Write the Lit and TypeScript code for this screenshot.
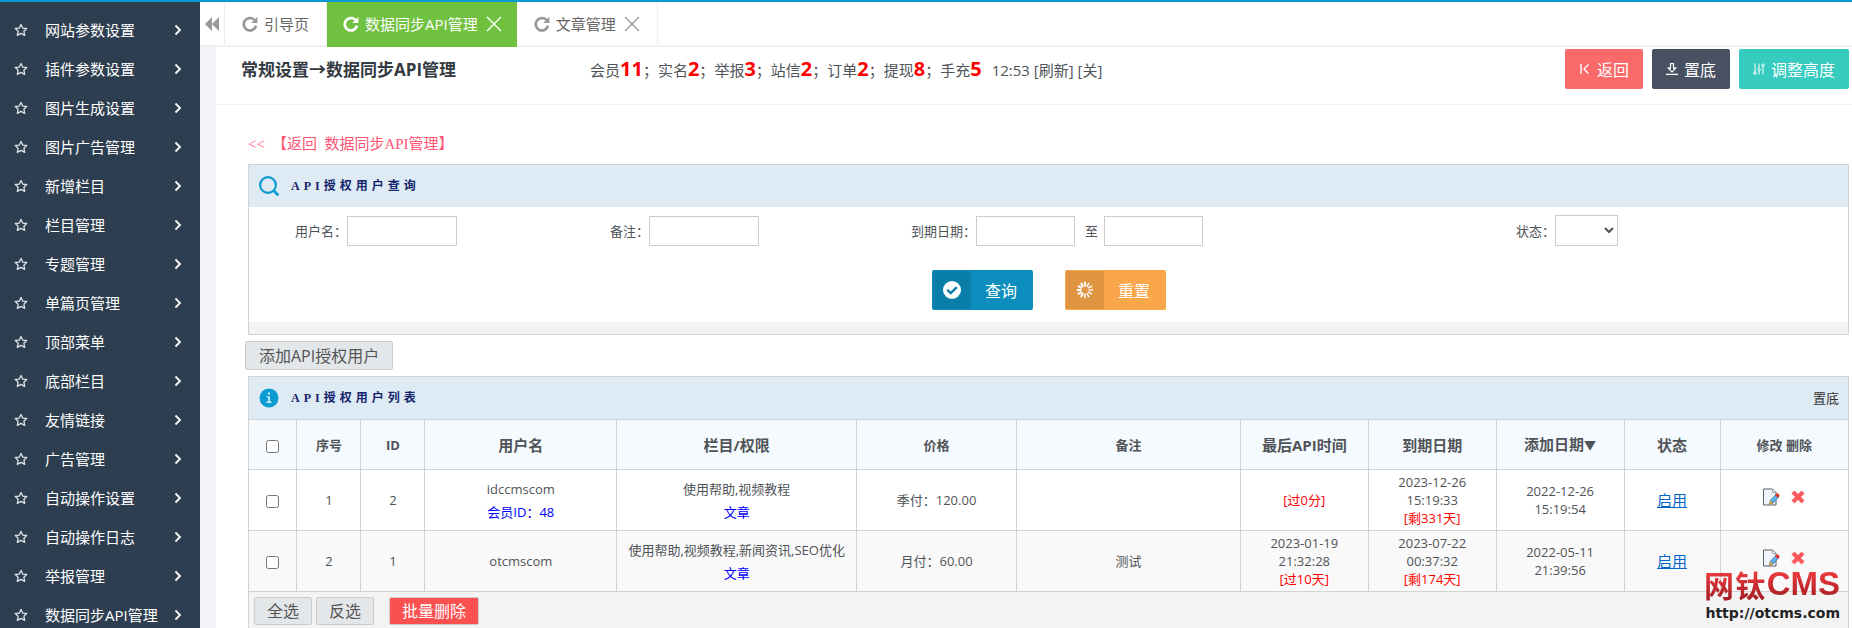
import { LitElement, html, css, svg, nothing } from "lit";
import { customElement, state } from "lit/decorators.js";

interface Row {
  no: number;
  id: number;
  user: string;
  memberId?: number;
  columns: string;
  kind: string;
  price: string;
  note: string;
  apiTime: string[];
  apiTag: string;
  expire: string[];
  expireTag: string;
  added: string[];
}

const MENU = [
  "网站参数设置", "插件参数设置", "图片生成设置", "图片广告管理",
  "新增栏目", "栏目管理", "专题管理", "单篇页管理",
  "顶部菜单", "底部栏目", "友情链接", "广告管理",
  "自动操作设置", "自动操作日志", "举报管理", "数据同步API管理",
];

const STATS: [string, number][] = [
  ["会员", 11], ["实名", 2], ["举报", 3], ["站信", 2], ["订单", 2], ["提现", 8], ["手充", 5],
];

const ROWS: Row[] = [
  {
    no: 1, id: 2, user: "idccmscom", memberId: 48,
    columns: "使用帮助,视频教程", kind: "文章", price: "季付：120.00", note: "",
    apiTime: [], apiTag: "[过0分]",
    expire: ["2023-12-26", "15:19:33"], expireTag: "[剩331天]",
    added: ["2022-12-26", "15:19:54"],
  },
  {
    no: 2, id: 1, user: "otcmscom",
    columns: "使用帮助,视频教程,新闻资讯,SEO优化", kind: "文章", price: "月付：60.00", note: "测试",
    apiTime: ["2023-01-19", "21:32:28"], apiTag: "[过10天]",
    expire: ["2023-07-22", "00:37:32"], expireTag: "[剩174天]",
    added: ["2022-05-11", "21:39:56"],
  },
];

const star = html`<svg class="star" viewBox="0 0 14 14" width="14" height="14" aria-hidden="true">
  <path d="M7 1.4 8.7 5.1 12.7 5.5 9.9 8.3 10.7 12.4 7 10.4 3.3 12.4 4.1 8.3 1.3 5.5 5.3 5.1Z"
    fill="none" stroke="#dfe4e8" stroke-width="1.3" stroke-linejoin="round"/></svg>`;

const chevron = html`<svg viewBox="0 0 8 12" width="8" height="12" aria-hidden="true">
  <path d="M1.5 1.5 6 6 1.5 10.5" fill="none" stroke="#fff" stroke-width="1.8"/></svg>`;

const refresh = html`<svg viewBox="0 0 16 16" width="16" height="16" aria-hidden="true">
  <path d="M12.4 3.9A6.2 6.2 0 1 0 14 9.6" fill="none" stroke="currentColor" stroke-width="2.7"/>
  <path d="M15.4.8V7H9.2Z" fill="currentColor"/></svg>`;

const cross = html`<svg viewBox="0 0 16 16" width="16" height="16" aria-hidden="true">
  <path d="M1 1 15 15M15 1 1 15" fill="none" stroke="currentColor" stroke-width="1.4"/></svg>`;

const loader = html`<svg viewBox="0 0 18 18" width="18" height="18" aria-hidden="true">
  ${Array.from({ length: 12 }, (_, i) => svg`<path d="M9 .8V5.4" stroke="#fff"
    stroke-width=${i > 6 || i === 0 ? 2 : 1.4} transform="rotate(${i * 30} 9 9)"/>`)}</svg>`;

const editIcon = html`<svg viewBox="0 0 18 18" width="18" height="18" aria-hidden="true">
  <path d="M1.5 1H10.5L14 4.5V17H1.5Z" fill="#eef4f9" stroke="#59616b" stroke-width="1"/>
  <path d="M10.5 1V4.5H14Z" fill="#fff" stroke="#8c949b" stroke-width=".8"/>
  <path d="M8.2 12.6 13.9 6.5 16.6 9 10.8 15.2Z" fill="#5fb4f0" stroke="#2d5f96" stroke-width=".7"/>
  <path d="M13.2 7.2 14.6 5.7Q15.4 5 16.3 5.8L17.2 6.7Q17.9 7.5 17.2 8.3L15.9 9.7Z" fill="#e8301c"/>
  <path d="M7.2 16.2 8.2 12.6 10.8 15.2Z" fill="#f3c04f" stroke="#8a6a2c" stroke-width=".6"/></svg>`;

const deleteIcon = html`<svg viewBox="0 0 14 14" width="14" height="14" aria-hidden="true">
  <path d="M3.4.8 7 4.2 10.6.8 13.3 3.4 9.8 7 13.3 10.6 10.6 13.2 7 9.8 3.4 13.2.7 10.6 4.2 7 .7 3.4Z"
    fill="#f8585a" stroke="#fa8c8c" stroke-width=".6" stroke-linejoin="round"/></svg>`;

@customElement("app-root")
export class AppRoot extends LitElement {
  @state() private picked = new Set<number>();

  static styles = css`
    :host {
      display: flex;
      flex-direction: column;
      height: 100vh;
      overflow: hidden;
      box-sizing: border-box;
      border-top: 2px solid #0c98d0;
      background: #fff;
      color: #505458;
      font: 13px/18px "Open Sans", "Noto Sans CJK SC", sans-serif;
    }
    *, *::before, *::after { box-sizing: border-box; }
    svg { display: block; flex: none; }
    a { color: inherit; text-decoration: none; }
    button { font-family: inherit; cursor: pointer; margin: 0; }

    .shell { display: flex; flex: 1; min-height: 0; }

    .sidebar { flex: none; width: 200px; background: #2d3e50; overflow: hidden; }
    .menu { list-style: none; margin: 0; padding: 8px 0 0; }
    .menu a {
      display: flex;
      align-items: center;
      height: 39px;
      padding: 0 18px 0 14px;
      color: #fff;
      font-size: 15px;
    }
    .star { margin-right: 17px; }
    .menu span { flex: 1; }

    .main { flex: 1; min-width: 0; display: flex; flex-direction: column; }

    .tabs { display: flex; flex: none; height: 45px; box-shadow: inset 0 -2px #eff0f0; font-size: 15px; color: #666; }
    .fold { width: 25px; padding: 0; border: 0; border-right: 1px solid #eee; background: none; color: #999; display: grid; place-items: center; height: 43px; }
    .tab { display: flex; align-items: center; height: 43px; padding: 0 17px; border-right: 1px solid #eee; }
    .tab a { display: flex; align-items: center; gap: 6px; height: 36px; }
    .tab svg { color: #999; }
    .tab.active { height: 45px; padding: 0 15px 2px 16px; border: 0; background: #71c140; color: #fff; }
    .tab.active svg { color: #fff; }
    .close { padding: 0; margin-left: 8px; border: 0; background: none; color: #999; }

    .page { flex: 1; min-height: 0; display: flex; flex-direction: column; border-left: 16px solid #f4f5fa; }
    .head { display: flex; align-items: flex-start; flex: none; height: 58px; padding: 2px 3px 0 25px; border-bottom: 1px solid #f4f4f4; }
    .head h1 { flex: none; width: 349px; margin: 0; font-size: 17px; line-height: 42px; font-weight: 700; color: #333a42; }
    .stats { flex: 1; font-size: 15px; line-height: 42px; white-space: nowrap; }
    .stats b { color: #f00; font-size: 20px; line-height: 20px; }
    .clock { margin-left: 10px; }
    .tools { display: flex; gap: 9px; }
    .tool { display: flex; align-items: center; gap: 6px; height: 40px; padding: 0 14px; border: 0; border-radius: 2px; color: #fff; font-size: 16px; }
    .back { background: #fa6a6a; }
    .bottom { background: #475161; }
    .adjust { background: #35cbbe; }

    .content { flex: 1; min-height: 0; display: flex; flex-direction: column; padding: 27px 3px 0 32px; }
    .crumb { display: flex; gap: 7px; flex: none; align-self: flex-start; margin-bottom: 8px; font: 15px/24px "Liberation Serif", "Noto Sans CJK SC", serif; color: #ff5574; }

    .panel { flex: none; border: 1px solid #d3d3d3; }
    .bar { display: flex; flex: none; align-items: center; height: 42px; padding: 0 9px 0 10px; background: #deeaf4; }
    .bar h2 { flex: 1; margin: 0 0 0 12px; font: 700 12px/18px "Liberation Serif", "Noto Sans CJK SC", serif; letter-spacing: 4px; color: #14246b; }
    .bar a { color: #333; }

    .fields { display: grid; grid-template-columns: 98fr 202fr 100fr 200fr 127fr 400fr 179fr 293fr; align-items: center; padding-top: 8px; }
    .fields label { text-align: right; white-space: nowrap; }
    .field { display: flex; align-items: center; }
    .field input, .field select { height: 30px; margin: 0; border: 1px solid #ccc; border-radius: 0; background: #fff; font: inherit; color: inherit; }
    .field input { width: 110px; }
    .field .date { width: 99px; }
    .field select { width: 63px; height: 31px; }
    .to { padding: 0 6px 0 10px; }
    .actions { display: flex; justify-content: center; gap: 32px; padding: 24px 0 12px; }
    .action { display: flex; align-items: center; width: 101px; height: 40px; padding: 1px; border: 0; border-radius: 2px; color: #fff; font-size: 16px; text-align: center; }
    .action i { display: grid; place-items: center; width: 38px; height: 38px; background: rgba(0, 0, 0, 0.1); }
    .action span { flex: 1; }
    .query { background: #0b8dbd; }
    .reset { background: #faa64b; }
    .strip { height: 12px; background: #f3f3f3; }

    .btn { height: 28px; padding: 0 12px; border: 1px solid #ccc; border-radius: 2px; background: #e4e7ea; color: #555; font-size: 16px; line-height: 24px; white-space: nowrap; }
    .add { flex: none; align-self: flex-start; height: 29px; padding: 0 13px; margin: 6px 0 6px -3px; }
    .danger { background: #fa5050; color: #fff; margin-left: 11px; }

    .list { flex: 1 0 auto; display: flex; flex-direction: column; border-bottom: 0; background: #f3f3f3; }
    table { width: 100%; table-layout: fixed; border-collapse: collapse; border: 0 solid #d3d3d3; border-width: 1px 0; background: #fff; }
    .w3 { width: 3%; } .w4 { width: 4%; } .w6 { width: 6%; } .w8 { width: 8%; }
    .w10 { width: 10%; } .w12 { width: 12%; } .w14 { width: 14%; } .w15 { width: 15%; }
    th, td { padding: 0; border-left: 1px solid #d3d3d3; text-align: center; vertical-align: middle; }
    th:first-child, td:first-child { border-left: 0; }
    thead tr { height: 50px; background: #f5faff; }
    tbody tr { height: 61px; border-top: 1px solid #d3d3d3; }
    tbody tr:nth-child(even) { background: #f9f9f9; }
    .big { font-size: 15px; }
    .sort { font-size: 12px; }
    .line { display: block; }
    .pair { display: grid; gap: 5px; }
    .blue { color: #00f; }
    .red { color: #f00; }
    .state { color: #06c; font-size: 15px; text-decoration: underline; }
    .ops { display: flex; justify-content: center; align-items: center; gap: 11px; padding: 0 1px 6px 0; }
    input[type="checkbox"] { margin: 0; width: 13px; height: 13px; vertical-align: middle; }
    .batch { display: flex; gap: 4px; padding: 5px; }

    .brand { position: absolute; right: 12px; bottom: 3px; width: 136px; text-align: right; color: #222; }
    .brand strong {
      display: flex;
      align-items: center;
      justify-content: space-between;
      height: 34px;
      font: 700 33px/34px "Liberation Sans", sans-serif;
      background: linear-gradient(#e8383b 20%, #a92026 90%);
      -webkit-background-clip: text;
      background-clip: text;
      color: transparent;
    }
    .brand em { font: 700 30px/34px "Noto Sans CJK SC", sans-serif; }
    .brand span { display: block; font: 700 14px/24px "DejaVu Sans", sans-serif; white-space: nowrap; }
  `;

  private toggle(no: number) {
    const next = new Set(this.picked);
    if (next.has(no)) next.delete(no);
    else next.add(no);
    this.picked = next;
  }

  private selectAll() {
    this.picked = new Set(ROWS.map((r) => r.no));
  }

  private invert() {
    this.picked = new Set(ROWS.filter((r) => !this.picked.has(r.no)).map((r) => r.no));
  }

  private renderTabs() {
    return html`<nav class="tabs" aria-label="标签页">
      <button class="fold" aria-label="收起"><svg viewBox="0 0 14 14" width="14" height="14">
        <path d="M7 0V14L0 7ZM14 0V14L7 7Z" fill="currentColor"/></svg></button>
      <div class="tab"><a href="#guide">${refresh}引导页</a></div>
      <div class="tab active"><a href="#api">${refresh}数据同步API管理</a>
        <button class="close" aria-label="关闭">${cross}</button></div>
      <div class="tab"><a href="#article">${refresh}文章管理</a>
        <button class="close" aria-label="关闭">${cross}</button></div>
    </nav>`;
  }

  private renderHead() {
    return html`<header class="head">
      <h1>常规设置→数据同步API管理</h1>
      <div class="stats">${STATS.map(([name, n], i) => html`${name}<b>${n}</b>${i < STATS.length - 1 ? "；" : nothing}`)}<span
        class="clock">12:53 <a href="#refresh">[刷新]</a> <a href="#close">[关]</a></span></div>
      <div class="tools">
        <button class="tool back"><svg viewBox="0 0 12 12" width="12" height="12"><path d="M2 1V11M9.5 1.5 5 6 9.5 10.5"
          fill="none" stroke="#fff" stroke-width="1.4"/></svg>返回</button>
        <button class="tool bottom"><svg viewBox="0 0 12 12" width="12" height="12"><path
          d="M4.5 .6H7.5V5.2H9.8L6 9 2.2 5.2H4.5ZM0 11.4H12" fill="none" stroke="#fff" stroke-width="1.2"/></svg>置底</button>
        <button class="tool adjust"><svg viewBox="0 0 12 12" width="12" height="12"><path
          d="M2 .5V9M6 .5V5M6 8V11.5M10 4V11.5" stroke="#fff"/><g fill="none" stroke="#fff"><circle cx="2" cy="10"
          r="1.3"/><circle cx="6" cy="6.5" r="1.3"/><circle cx="10" cy="2.3" r="1.3"/></g></svg>调整高度</button>
      </div>
    </header>`;
  }

  private renderSearch() {
    return html`<form class="panel" @submit=${(e: Event) => e.preventDefault()}>
      <div class="bar">
        <svg viewBox="0 0 20 20" width="20" height="20" aria-hidden="true"><circle cx="9" cy="9" r="7.9" fill="none"
          stroke="#0c9bd0" stroke-width="2.2"/><path d="M14 14 19.3 19.3" stroke="#0c9bd0" stroke-width="2.8"/></svg>
        <h2>API授权用户查询</h2>
      </div>
      <div class="fields">
        <label for="user">用户名：</label><div class="field"><input id="user" type="text"></div>
        <label for="note">备注：</label><div class="field"><input id="note" type="text"></div>
        <label for="from">到期日期：</label><div class="field"><input id="from" class="date" type="text"><label
          class="to" for="until">至</label><input id="until" class="date" type="text"></div>
        <label for="status">状态：</label><div class="field"><select id="status"><option></option></select></div>
      </div>
      <div class="actions">
        <button class="action query" type="submit"><i><svg viewBox="0 0 18 18" width="18" height="18"><circle cx="9" cy="9"
          r="9" fill="#fff"/><path d="M4.2 8.8 7.8 12.2 13.8 6.2" fill="none" stroke="#0a7faa" stroke-width="2.4"/></svg></i><span>查询</span></button>
        <button class="action reset" type="reset"><i>${loader}</i><span>重置</span></button>
      </div>
      <div class="strip"></div>
    </form>`;
  }

  private renderRow(r: Row) {
    return html`<tr>
      <td><input type="checkbox" aria-label="选择 ${r.user}" .checked=${this.picked.has(r.no)}
        @change=${() => this.toggle(r.no)}></td>
      <td>${r.no}</td>
      <td>${r.id}</td>
      <td><div class="pair"><span>${r.user}</span>${r.memberId
        ? html`<span class="blue">会员ID：${r.memberId}</span>` : nothing}</div></td>
      <td><div class="pair"><span>${r.columns}</span><span class="blue">${r.kind}</span></div></td>
      <td>${r.price}</td>
      <td>${r.note}</td>
      <td>${r.apiTime.map((t) => html`<span class="line">${t}</span>`)}<span class="line red">${r.apiTag}</span></td>
      <td>${r.expire.map((t) => html`<span class="line">${t}</span>`)}<span class="line red">${r.expireTag}</span></td>
      <td>${r.added.map((t) => html`<span class="line">${t}</span>`)}</td>
      <td><a class="state" href="#state">启用</a></td>
      <td><div class="ops"><a href="#edit" aria-label="修改">${editIcon}</a><a href="#delete"
        aria-label="删除">${deleteIcon}</a></div></td>
    </tr>`;
  }

  private renderList() {
    return html`<section class="panel list">
      <div class="bar">
        <svg viewBox="0 0 20 20" width="20" height="20" aria-hidden="true"><circle cx="10" cy="10" r="9.5" fill="#0c9bd0"/>
          <path d="M8.8 4.6H11V6.6H8.8ZM7.6 8.2H11V13.6H12.6V15H7.4V13.6H9.2V9.6H7.6Z" fill="#c4ecfa"/></svg>
        <h2>API授权用户列表</h2>
        <a href="#bottom">置底</a>
      </div>
      <table>
        <colgroup>
          <col class="w3"><col class="w4"><col class="w4"><col class="w12"><col class="w15"><col class="w10">
          <col class="w14"><col class="w8"><col class="w8"><col class="w8"><col class="w6"><col class="w8">
        </colgroup>
        <thead><tr>
          <th><input type="checkbox" aria-label="全选" .checked=${this.picked.size === ROWS.length}
            @change=${() => (this.picked.size === ROWS.length ? this.invert() : this.selectAll())}></th>
          <th>序号</th><th>ID</th><th class="big">用户名</th><th class="big">栏目/权限</th><th>价格</th><th>备注</th>
          <th class="big">最后API时间</th><th class="big">到期日期</th><th class="big">添加日期<span class="sort">▼</span></th>
          <th class="big">状态</th><th>修改 删除</th>
        </tr></thead>
        <tbody>${ROWS.map((r) => this.renderRow(r))}</tbody>
      </table>
      <div class="batch">
        <button class="btn" @click=${this.selectAll}>全选</button>
        <button class="btn" @click=${this.invert}>反选</button>
        <button class="btn danger">批量删除</button>
      </div>
    </section>`;
  }

  render() {
    return html`<div class="shell">
      <aside class="sidebar"><ul class="menu">
        ${MENU.map((m) => html`<li><a href="#menu">${star}<span>${m}</span>${chevron}</a></li>`)}
      </ul></aside>
      <div class="main">
        ${this.renderTabs()}
        <div class="page">
          ${this.renderHead()}
          <main class="content">
            <a class="crumb" href="#back"><span>&lt;&lt;</span><span>【返回&nbsp; 数据同步API管理】</span></a>
            ${this.renderSearch()}
            <button class="btn add">添加API授权用户</button>
            ${this.renderList()}
          </main>
        </div>
      </div>
    </div>
    <div class="brand"><strong><em>网</em><em>钛</em>CMS</strong><span>http://otcms.com</span></div>`;
  }
}
